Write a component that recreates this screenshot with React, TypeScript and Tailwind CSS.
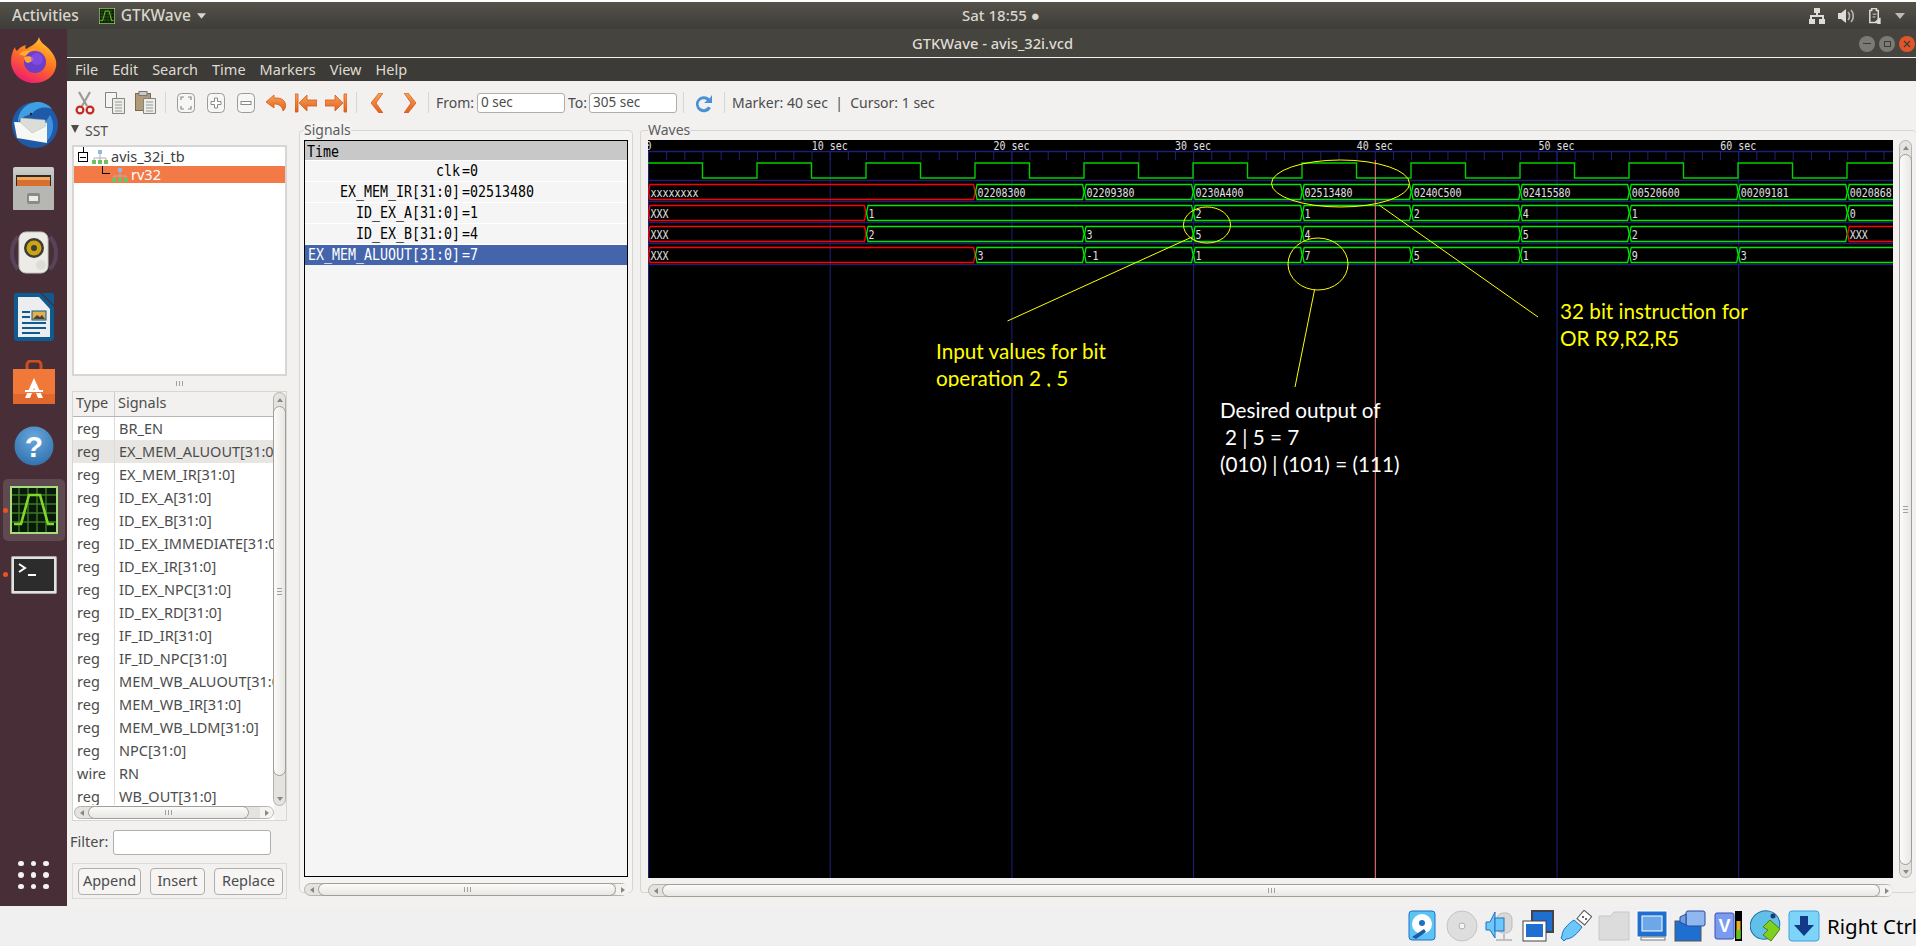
import React from 'react';

const uiFont = "font-['Noto_Sans',sans-serif]";
const monoFont = "font-['DejaVu_Sans_Mono',monospace]";

const xAt = (t: number) => 648 + t * 18.17;

type Seg = { from: number; to: number; label: string; red?: boolean };

const busRows: Seg[][] = [
  [
    { from: 0, to: 18, label: 'xxxxxxxx', red: true },
    { from: 18, to: 24, label: '02208300' },
    { from: 24, to: 30, label: '02209380' },
    { from: 30, to: 36, label: '0230A400' },
    { from: 36, to: 42, label: '02513480' },
    { from: 42, to: 48, label: '0240C500' },
    { from: 48, to: 54, label: '02415580' },
    { from: 54, to: 60, label: '00520600' },
    { from: 60, to: 66, label: '00209181' },
    { from: 66, to: 72, label: '00208681' },
  ],
  [
    { from: 0, to: 12, label: 'XXX', red: true },
    { from: 12, to: 30, label: '1' },
    { from: 30, to: 36, label: '2' },
    { from: 36, to: 42, label: '1' },
    { from: 42, to: 48, label: '2' },
    { from: 48, to: 54, label: '4' },
    { from: 54, to: 66, label: '1' },
    { from: 66, to: 72, label: '0' },
  ],
  [
    { from: 0, to: 12, label: 'XXX', red: true },
    { from: 12, to: 24, label: '2' },
    { from: 24, to: 30, label: '3' },
    { from: 30, to: 36, label: '5' },
    { from: 36, to: 48, label: '4' },
    { from: 48, to: 54, label: '5' },
    { from: 54, to: 66, label: '2' },
    { from: 66, to: 72, label: 'XXX', red: true },
  ],
  [
    { from: 0, to: 18, label: 'XXX', red: true },
    { from: 18, to: 24, label: '3' },
    { from: 24, to: 30, label: '-1' },
    { from: 30, to: 36, label: '1' },
    { from: 36, to: 42, label: '7' },
    { from: 42, to: 48, label: '5' },
    { from: 48, to: 54, label: '1' },
    { from: 54, to: 60, label: '9' },
    { from: 60, to: 72, label: '3' },
  ],
];

const signalRows = [
  { name: 'clk', value: '0' },
  { name: 'EX_MEM_IR[31:0]', value: '02513480' },
  { name: 'ID_EX_A[31:0]', value: '1' },
  { name: 'ID_EX_B[31:0]', value: '4' },
  { name: 'EX_MEM_ALUOUT[31:0]', value: '7', active: true },
];

const sstSignals = [
  ['reg', 'BR_EN'],
  ['reg', 'EX_MEM_ALUOUT[31:0]'],
  ['reg', 'EX_MEM_IR[31:0]'],
  ['reg', 'ID_EX_A[31:0]'],
  ['reg', 'ID_EX_B[31:0]'],
  ['reg', 'ID_EX_IMMEDIATE[31:0]'],
  ['reg', 'ID_EX_IR[31:0]'],
  ['reg', 'ID_EX_NPC[31:0]'],
  ['reg', 'ID_EX_RD[31:0]'],
  ['reg', 'IF_ID_IR[31:0]'],
  ['reg', 'IF_ID_NPC[31:0]'],
  ['reg', 'MEM_WB_ALUOUT[31:0]'],
  ['reg', 'MEM_WB_IR[31:0]'],
  ['reg', 'MEM_WB_LDM[31:0]'],
  ['reg', 'NPC[31:0]'],
  ['wire', 'RN'],
  ['reg', 'WB_OUT[31:0]'],
];

function clockPath() {
  let d = 'M648 163';
  for (let k = 0; k < 12; k++) {
    const rise = 648 + 109 * k;
    const fall = rise + 54.5;
    const next = rise + 109;
    d += ` L${fall} 163 L${fall} 178 L${next} 178 L${next} 163`;
  }
  return d;
}

// squeezed mono label, the gtkwave font is narrow and tall
const WaveText = ({ x, y, children }: { x: number; y: number; children: React.ReactNode }) => (
  <text transform={`translate(${x} ${y}) scale(0.86 1)`} fontSize="11.6" fill="#e0e0e0">
    {children}
  </text>
);

const Waves = () => {
  const ticks = Array.from({ length: 70 }, (_, i) => i);
  return (
    <svg viewBox="648 140 1245 738" className={`w-[1245px] h-[738px] block bg-black ${monoFont}`}>
      <defs>
        <clipPath id="noteClip">
          <rect x="900" y="280" width="900" height="107" />
        </clipPath>
      </defs>
      {[0, 10, 20, 30, 50, 60].map(t => (
        <line key={t} x1={xAt(t) + 0.5} x2={xAt(t) + 0.5} y1="152" y2="878" stroke="#1f1f80" />
      ))}
      {[151.5, 180.5, 201.5, 222.5, 243.5, 264.5].map(y => (
        <line key={y} x1="648" x2="1893" y1={y} y2={y} stroke="#1f1f70" strokeWidth="1.4" />
      ))}
      {ticks.map(t => (
        <line key={t} x1={xAt(t) + 0.5} x2={xAt(t) + 0.5} y1="152" y2="160" stroke="#1f1f80" />
      ))}
      <WaveText x={645.5} y={149.5}>0</WaveText>
      {[10, 20, 30, 40, 50, 60].map(t => (
        <WaveText key={t} x={xAt(t) - 18} y={149.5}>
          {t} sec
        </WaveText>
      ))}
      <path d={clockPath()} fill="none" stroke="#00d000" strokeWidth="1.4" />
      {busRows.map((row, r) => {
        const top = 184.5 + r * 21;
        const bottom = top + 15;
        const mid = top + 7.5;
        return row.map(seg => {
          const a = xAt(seg.from) + 0.5;
          const b = xAt(seg.to);
          return (
            <g key={`${r}-${seg.from}`}>
              <path
                d={`M${a} ${mid} L${a + 1.5} ${top} L${b - 1.5} ${top} L${b} ${mid} L${b - 1.5} ${bottom} L${a + 1.5} ${bottom} Z`}
                fill="none"
                stroke={seg.red ? '#ff0000' : '#00e800'}
                strokeWidth="1.3"
              />
              <WaveText x={a + 2} y={mid + 4.5}>
                {seg.label}
              </WaveText>
            </g>
          );
        });
      })}
      <line x1={xAt(40) + 0.5} x2={xAt(40) + 0.5} y1="160" y2="878" stroke="#ff8080" />
      <g fill="none" stroke="#ffff00" strokeWidth="1">
        <ellipse cx="1340.5" cy="183.5" rx="69" ry="23.5" />
        <ellipse cx="1207" cy="225" rx="23.5" ry="18" />
        <ellipse cx="1318" cy="264" rx="30" ry="26" />
        <line x1="1007.5" y1="321" x2="1192" y2="237" />
        <line x1="1314.5" y1="290" x2="1295" y2="387" />
        <line x1="1379" y1="205" x2="1538" y2="317" />
      </g>
      <g className="font-['Lato',sans-serif]" fontSize="20.7">
        <g fill="#ffff00">
          <text x="936" y="359">Input values for bit</text>
          <text x="936" y="386" clipPath="url(#noteClip)">
            operation 2 , 5
          </text>
          <text x="1560" y="319">32 bit instruction for</text>
          <text x="1560" y="346">OR R9,R2,R5</text>
        </g>
        <g fill="#ffffff">
          <text x="1220" y="418">Desired output of</text>
          <text x="1225" y="445">2 | 5 = 7</text>
          <text x="1220" y="472">(010) | (101) = (111)</text>
        </g>
      </g>
    </svg>
  );
};

const ArrowBtn = ({ dir, className = '' }: { dir: 'l' | 'r' | 'u' | 'd'; className?: string }) => {
  const points = { l: '6,1 2,4 6,7', r: '2,1 6,4 2,7', u: '1,6 4,2 7,6', d: '1,2 4,6 7,2' }[dir];
  return (
    <svg viewBox="0 0 8 8" className={`w-[8px] h-[8px] ${className}`}>
      <polygon points={points} fill="#8a8884" />
    </svg>
  );
};

const Grip = ({ vertical = false }: { vertical?: boolean }) => (
  <div className={`flex gap-[2px] ${vertical ? 'flex-col' : ''}`}>
    <span className={vertical ? 'h-px w-[5px] bg-[#a0a0a0]' : 'w-px h-[5px] bg-[#a0a0a0]'} />
    <span className={vertical ? 'h-px w-[5px] bg-[#a0a0a0]' : 'w-px h-[5px] bg-[#a0a0a0]'} />
    <span className={vertical ? 'h-px w-[5px] bg-[#a0a0a0]' : 'w-px h-[5px] bg-[#a0a0a0]'} />
  </div>
);

const HScroll = ({ thumb, className = '' }: { thumb: string; className?: string }) => (
  <div className={`flex items-center h-[13px] border border-[#b5b3af] rounded-full bg-[#e4e3e0] ${className}`}>
    <div className="w-[13px] h-full flex items-center justify-center shrink-0">
      <ArrowBtn dir="l" />
    </div>
    <div className="flex-1 h-full">
      <div className={`h-[13px] -mt-px border border-[#a09e9a] rounded-full bg-gradient-to-b from-[#fbfbfa] to-[#e8e7e4] flex items-center justify-center ${thumb}`}>
        <Grip />
      </div>
    </div>
    <div className="w-[13px] h-full flex items-center justify-center shrink-0 bg-[#f4f3f1] rounded-r-full">
      <ArrowBtn dir="r" />
    </div>
  </div>
);

const VScroll = ({ thumb, className = '' }: { thumb: string; className?: string }) => (
  <div className={`flex flex-col items-center w-[13px] border border-[#b5b3af] rounded-full bg-[#e4e3e0] ${className}`}>
    <div className="h-[13px] w-full flex items-center justify-center shrink-0">
      <ArrowBtn dir="u" />
    </div>
    <div className="flex-1 w-full">
      <div className={`w-[13px] -ml-px border border-[#a09e9a] rounded-full bg-gradient-to-r from-[#fbfbfa] to-[#e8e7e4] flex items-center justify-center ${thumb}`}>
        <Grip vertical />
      </div>
    </div>
    <div className="h-[13px] w-full flex items-center justify-center shrink-0">
      <ArrowBtn dir="d" />
    </div>
  </div>
);

// dock icons
const Firefox = () => (
  <svg viewBox="0 0 46 46" className="w-[46px] h-[46px]">
    <defs>
      <linearGradient id="ffA" x1="0.8" y1="0" x2="0.3" y2="1">
        <stop offset="0" stopColor="#ffcf33" />
        <stop offset="0.45" stopColor="#ff7a1f" />
        <stop offset="1" stopColor="#f0186f" />
      </linearGradient>
    </defs>
    <path d="M28 0c1 6 7 8 11 13 5 6 7 11 6 17-2 10-11 16-22 16C10 46 0 36 0 24c0-6 2-11 4-14 0 2 1 3 2 4 2-3 5-5 9-6-1 2-1 3 0 4 5-3 11-5 13-12z" fill="url(#ffA)" />
    <path d="M8 17c3-3 7-4 9-3 3-3 6-3 9-2-7 0-9 4-9 6-3 1-6 1-9-1z" fill="#ffb02e" />
    <circle cx="24" cy="25" r="11" fill="#6b3fc8" />
    <path d="M13 20c3-1 7-1 9 1 2 2-2 4-5 5-2 0-4-3-4-6z" fill="#ffa436" />
    <circle cx="26" cy="22" r="6" fill="#8a4ff0" opacity="0.7" />
  </svg>
);

const Thunderbird = () => (
  <svg viewBox="0 0 48 48" className="w-[48px] h-[48px]">
    <circle cx="25" cy="25" r="23" fill="#1f5aa8" />
    <path d="M8 22C8 10 18 1 30 2c5 1 9 3 12 7-8-3-16-1-20 5-5 1-10 3-14 8z" fill="#3f9fe0" />
    <path d="M40 15c5 8 4 19-3 26l-3-6 3-3-4-1 3-4-3-1z" fill="#3f8fdc" />
    <path d="M4 22l33 1v20L7 38z" fill="#f7f7f4" />
    <path d="M11 18l24 2 1 6-14 7-12-11z" fill="#dcdcd8" stroke="#b5b5b0" strokeWidth="0.5" />
    <circle cx="21" cy="14" r="1.2" fill="#223" />
  </svg>
);

const Files = () => (
  <svg viewBox="0 0 42 44" className="w-[42px] h-[44px]">
    <defs>
      <linearGradient id="fileBody" x1="0" y1="0" x2="0" y2="1">
        <stop offset="0" stopColor="#cfcfcb" />
        <stop offset="1" stopColor="#8f8f8b" />
      </linearGradient>
    </defs>
    <rect x="0" y="0" width="41" height="43" rx="2" fill="url(#fileBody)" />
    <rect x="3" y="8" width="35" height="11" fill="#2b2a28" />
    <rect x="4" y="10" width="33" height="3" fill="#f0a95a" />
    <rect x="4" y="13" width="33" height="6" fill="#d86f2e" />
    <rect x="0" y="19" width="41" height="24" rx="1" fill="#b6b6b2" />
    <rect x="14" y="26" width="13" height="11" rx="2" fill="#8a8a86" />
    <rect x="16" y="29" width="9" height="5" fill="#ececea" />
  </svg>
);

const Rhythmbox = () => (
  <svg viewBox="0 0 48 44" className="w-[48px] h-[44px]">
    <path d="M8 6C0 14 0 30 8 38M40 6c8 8 8 24 0 32" fill="none" stroke="#5e4f6b" strokeWidth="4" opacity="0.7" />
    <rect x="9" y="1" width="29" height="41" rx="7" fill="#ecebe6" stroke="#c8c6c0" />
    <circle cx="24" cy="17" r="10" fill="#3f3c35" />
    <circle cx="24" cy="17" r="7.5" fill="#c9a414" />
    <circle cx="24" cy="17" r="3" fill="#3f3c35" />
    <circle cx="31" cy="34" r="5" fill="#dddcd6" />
  </svg>
);

const Writer = () => (
  <svg viewBox="0 0 40 48" className="w-[40px] h-[48px]">
    <path d="M2 0h24l14 14v31a3 3 0 0 1-3 3H3a3 3 0 0 1-3-3V2a2 2 0 0 1 2-2z" fill="#0f5a8f" />
    <path d="M28 0h10a2 2 0 0 1 2 2v10z" fill="#0f5a8f" />
    <path d="M4 4h21l11 12v28H4z" fill="#ecedef" />
    <path d="M8 18h8v2H8zM8 23h8v2H8zM8 29h24v2H8zM8 34h24v2H8zM8 39h18v2H8z" fill="#0f5a8f" />
    <rect x="18" y="18" width="14" height="9" fill="#e3b04a" stroke="#0f5a8f" />
    <path d="M19 26l4-4 3 2 2-2 3 4z" fill="#444" />
  </svg>
);

const Software = () => (
  <svg viewBox="0 0 42 44" className="w-[42px] h-[44px]">
    <path d="M14 12V5a4 4 0 0 1 4-4h6a4 4 0 0 1 4 4v7" fill="none" stroke="#c9501f" strokeWidth="3" />
    <path d="M0 9h42v35H0z" fill="#f0793a" />
    <path d="M0 34h42v10H0z" fill="#e0682c" />
    <path d="M21 18l-9 20h5l4-10 4 10h5z" fill="#fff" />
    <rect x="12" y="30" width="18" height="3" fill="#f0793a" />
    <rect x="12" y="30" width="18" height="2" fill="#fff" />
  </svg>
);

const Help = () => (
  <svg viewBox="0 0 40 40" className="w-[40px] h-[40px]">
    <defs>
      <radialGradient id="helpBg" cx="0.5" cy="0.3" r="0.8">
        <stop offset="0" stopColor="#6aa9dd" />
        <stop offset="1" stopColor="#2a6ba8" />
      </radialGradient>
    </defs>
    <circle cx="20" cy="20" r="19.5" fill="url(#helpBg)" />
    <text x="20" y="31" textAnchor="middle" fontSize="30" fontWeight="700" fill="#ffffff" className="font-['Liberation_Sans',sans-serif]">
      ?
    </text>
  </svg>
);

const GtkWaveLogo = ({ size }: { size: string }) => (
  <svg viewBox="0 0 48 48" className={size}>
    <rect x="1" y="1" width="46" height="46" fill="#0a1a0a" stroke="#a8dc78" strokeWidth="2" />
    <path d="M2 9h44M2 18h44M2 27h44M2 36h44M9 2v44M18 2v44M27 2v44M36 2v44" stroke="#3d7a24" strokeWidth="1.4" />
    <path d="M4 38h7L19 9h11l8 29h6" fill="none" stroke="#7fd82a" strokeWidth="2.6" />
  </svg>
);

const TerminalIcon = () => (
  <svg viewBox="0 0 46 38" className="w-[46px] h-[38px]">
    <rect x="0.5" y="0.5" width="45" height="37" rx="1" fill="#e2e2de" stroke="#a8a8a4" />
    <rect x="3" y="3" width="40" height="32" fill="#2c2c2c" />
    <path d="M8 8l6 4-6 4" fill="none" stroke="#fff" strokeWidth="2" />
    <rect x="17" y="18" width="8" height="2" fill="#fff" />
  </svg>
);

const Dock = () => {
  const slot = 'h-[64.3px] w-full flex items-center justify-center shrink-0';
  return (
    <div className="w-[67px] bg-[#482e37] flex flex-col items-center shrink-0">
      <div className="w-full -mt-px">
        <div className={slot}><Firefox /></div>
        <div className={slot}><Thunderbird /></div>
        <div className={slot}><Files /></div>
        <div className={slot}><Rhythmbox /></div>
        <div className={slot}><Writer /></div>
        <div className={slot}><Software /></div>
        <div className={slot}><Help /></div>
        <div className={`${slot} relative`}>
          <div className="w-[62px] h-[62px] bg-[#5f4a52] rounded-[5px] flex items-center justify-center">
            <GtkWaveLogo size="w-[48px] h-[48px]" />
          </div>
          <span className="absolute left-[3px] top-[30px] w-[5px] h-[5px] rounded-full bg-[#e95420]" />
        </div>
        <div className={`${slot} relative`}>
          <TerminalIcon />
          <span className="absolute left-[3px] top-[30px] w-[5px] h-[5px] rounded-full bg-[#e95420]" />
        </div>
      </div>
      <div className="mt-auto mb-[17px] grid grid-cols-3 gap-x-[7px] gap-y-[6px]">
        {Array.from({ length: 9 }).map((_, i) => (
          <span key={i} className="w-[5.5px] h-[5.5px] rounded-full bg-[#f4f2f2]" />
        ))}
      </div>
    </div>
  );
};

// toolbar icons
const Tool = ({ children }: { children: React.ReactNode }) => (
  <div className="w-[30px] h-[24px] flex items-center justify-center shrink-0">{children}</div>
);

const Sep = ({ className = '' }: { className?: string }) => (
  <span className={`w-px h-[21px] bg-[#d8d6d2] shrink-0 ${className}`} />
);

const Cut = () => (
  <svg viewBox="0 0 20 24" className="w-[20px] h-[24px]">
    <path d="M4 1l8 14M15 1L7 15" stroke="#9a9a96" strokeWidth="2.2" />
    <circle cx="5" cy="19" r="3.4" fill="none" stroke="#c22a22" strokeWidth="2.2" />
    <circle cx="15" cy="19" r="3.4" fill="none" stroke="#c22a22" strokeWidth="2.2" />
  </svg>
);

const Copy = () => (
  <svg viewBox="0 0 20 22" className="w-[20px] h-[22px]">
    <path d="M.5.5h11v15H.5z" fill="#f4f4f2" stroke="#85857f" />
    <path d="M7.5 6.5h12v15h-12z" fill="#ececea" stroke="#85857f" />
    <path d="M10 10h7M10 13h7M10 16h7M10 19h7" stroke="#9a9a96" />
  </svg>
);

const Paste = () => (
  <svg viewBox="0 0 21 23" className="w-[21px] h-[23px]">
    <rect x="0.5" y="2.5" width="15" height="17" fill="#b09a78" stroke="#7d6a4e" />
    <rect x="4" y="0.5" width="8" height="4" fill="#ccc" stroke="#777" />
    <path d="M8.5 7.5h12v15h-12z" fill="#ececea" stroke="#85857f" />
    <path d="M11 11h7M11 14h7M11 17h7M11 20h7" stroke="#9a9a96" />
  </svg>
);

const ZoomFrame = ({ children }: { children: React.ReactNode }) => (
  <svg viewBox="0 0 18 20" className="w-[18px] h-[20px]">
    <rect x="0.5" y="0.5" width="17" height="19" rx="4" fill="#f6f6f4" stroke="#9c9a96" />
    {children}
  </svg>
);

const OrangeArrow = ({ d, w, h, vb }: { d: string; w: string; h: string; vb: string }) => (
  <svg viewBox={vb} className={`${w} ${h}`}>
    <defs>
      <linearGradient id="orangeFill" x1="0" y1="0" x2="0" y2="1">
        <stop offset="0" stopColor="#f7a35a" />
        <stop offset="1" stopColor="#e0601c" />
      </linearGradient>
    </defs>
    <path d={d} fill="url(#orangeFill)" stroke="#d85c18" strokeWidth="0.8" />
  </svg>
);

const Toolbar = () => (
  <div className={`h-[37px] flex items-center pl-[3px] pt-[6px] shrink-0 text-[14px] text-[#4c4c4c] ${uiFont}`}>
    <Tool><Cut /></Tool>
    <Tool><Copy /></Tool>
    <Tool><Paste /></Tool>
    <Sep className="ml-[5px] mr-[5px]" />
    <Tool>
      <ZoomFrame>
        <path d="M4 7V4h3M11 4h3v3M14 13v3h-3M7 16H4v-3" fill="none" stroke="#8c8a86" strokeWidth="1.2" />
      </ZoomFrame>
    </Tool>
    <Tool>
      <ZoomFrame>
        <path d="M7.5 5h3v3.5H14v3h-3.5V15h-3v-3.5H4v-3h3.5z" fill="#fff" stroke="#8c8a86" />
      </ZoomFrame>
    </Tool>
    <Tool>
      <ZoomFrame>
        <rect x="4" y="8.5" width="10" height="3" fill="#fff" stroke="#8c8a86" />
      </ZoomFrame>
    </Tool>
    <Tool>
      <OrangeArrow vb="0 0 22 18" w="w-[22px]" h="h-[18px]" d="M9 1L1 8l8 6v-4c5 0 8 2 9 7 3-2 4-8 0-11-2-2-5-2-9-2z" />
    </Tool>
    <Tool>
      <OrangeArrow vb="0 0 22 20" w="w-[22px]" h="h-[20px]" d="M0 1h3v18H0zM12 2L4 10l8 8v-5h10V7H12z" />
    </Tool>
    <Tool>
      <OrangeArrow vb="0 0 22 20" w="w-[22px]" h="h-[20px]" d="M22 1h-3v18h3zM10 2l8 8-8 8v-5H0V7h10z" />
    </Tool>
    <Sep className="ml-[5px] mr-[5px]" />
    <Tool>
      <OrangeArrow vb="0 0 12 20" w="w-[12px]" h="h-[20px]" d="M8 0h4L5 10l7 10H8L0 10z" />
    </Tool>
    <div className="ml-[3px]">
      <Tool>
        <OrangeArrow vb="0 0 12 20" w="w-[12px]" h="h-[20px]" d="M4 0H0l7 10-7 10h4l8-10z" />
      </Tool>
    </div>
    <Sep className="ml-[3px]" />
    <span className="ml-[7px] w-[41px]">From:</span>
    <div className="w-[88px] h-[20px] border border-[#b0aeaa] rounded-[3px] bg-white flex items-center pl-[3px] text-[13.5px] leading-none">0 sec</div>
    <span className="ml-[3px] w-[21px]">To:</span>
    <div className="w-[88px] h-[20px] border border-[#b0aeaa] rounded-[3px] bg-white flex items-center pl-[3px] text-[13.5px] leading-none">305 sec</div>
    <Sep className="ml-[6px]" />
    <svg viewBox="0 0 20 20" className="w-[20px] h-[20px] ml-[10px] mr-[10px]">
      <path d="M15.5 5.5A8 8 0 1 0 17 15l-3-1.5a5 5 0 1 1-1-6L10 10h8V2z" fill="#4a90d2" />
    </svg>
    <Sep />
    <span className="ml-[7px]">Marker: 40 sec&nbsp; | &nbsp;Cursor: 1 sec</span>
  </div>
);

const HierIcon = () => (
  <svg viewBox="0 0 16 16" className="w-[16px] h-[16px] shrink-0">
    <rect x="6" y="1" width="4" height="4" fill="#8fb8e8" />
    <path d="M8 5v4M2 11V9h12v2M8 9v2" stroke="#b0b0b0" fill="none" />
    <rect x="0" y="11" width="4" height="4" fill="#6ec060" />
    <rect x="6" y="11" width="4" height="4" fill="#6ec060" />
    <rect x="12" y="11" width="4" height="4" fill="#6ec060" />
  </svg>
);

const LeftPane = () => (
  <div className={`w-[226px] pl-[5px] pr-[6px] flex flex-col shrink-0 text-[#4c4c4c] ${uiFont}`}>
    <div className="h-[27px] flex items-center text-[14px] shrink-0 pb-[2px]">
      <svg viewBox="0 0 8 8" className="w-[8px] h-[8px] -ml-px mb-[4px]">
        <polygon points="0,0 8,0 4,8" fill="#4c4c4c" />
      </svg>
      <span className="ml-[6px]">SST</span>
    </div>
    <div className="h-[231px] border-2 border-[#d8d6d2] bg-white text-[14.5px] text-[#3c3c3c] shrink-0 relative">
      <div className="h-[19px] flex items-center pl-[18px] gap-[3px]">
        <HierIcon />
        <span>avis_32i_tb</span>
      </div>
      <div className="h-[17px] bg-[#f37946] flex items-center pl-[38px] gap-[3px] text-white">
        <HierIcon />
        <span>rv32</span>
      </div>
      <div className="absolute left-[4px] top-[5px] w-[10px] h-[10px] border border-black flex items-center justify-center">
        <span className="w-[6px] h-px bg-black" />
      </div>
      <span className="absolute left-[9px] top-0 w-px h-[5px] bg-black" />
      <span className="absolute left-[28px] top-[19px] w-[8px] h-[8px] border-l border-b border-black" />
    </div>
    <div className="h-[15px] flex items-center justify-center shrink-0">
      <Grip />
    </div>
    <div className="h-[430px] border border-[#d8d6d2] shrink-0 flex flex-col relative overflow-hidden">
      <div className="h-[25px] flex border-b border-[#b8b6b2] text-[14.5px] shrink-0 bg-[#f2f1f0] w-[201px]">
        <span className="w-[42px] pl-[3px] border-r border-[#cfcdc9]">Type</span>
        <span className="pl-[3px]">Signals</span>
      </div>
      <div className="w-[201px] bg-white overflow-hidden text-[14.5px] flex-1">
        {sstSignals.map(([type, name]) => (
          <div
            key={name}
            className={`h-[23px] flex items-center whitespace-nowrap ${name === 'EX_MEM_ALUOUT[31:0]' ? 'bg-[#e8e6e3]' : ''}`}
          >
            <span className="w-[42px] pl-[4px] border-r border-[#dddbd7] h-full flex items-center shrink-0">{type}</span>
            <span className="pl-[4px]">{name}</span>
          </div>
        ))}
      </div>
      <div className="h-[15px] bg-white shrink-0 flex items-center pl-px w-[201px]">
        <HScroll thumb="w-[161px]" className="w-[200px]" />
      </div>
      <VScroll thumb="h-[370px]" className="absolute right-0 top-0 h-[414px]" />
    </div>
    <div className="h-[42px] flex items-center text-[14.5px] shrink-0 -ml-[2px]">
      <span className="w-[43px]">Filter:</span>
      <div className="w-[158px] h-[25px] border border-[#b0aeaa] rounded-[3px] bg-white" />
    </div>
    <div className="h-[36px] border border-[#dddbd7] flex items-center pl-[5px] text-[14.5px] shrink-0">
      <div className="w-[63px] h-[27px] border border-[#b0aeaa] rounded-[4px] flex items-center justify-center bg-[#f6f5f4]">Append</div>
      <div className="w-[55px] h-[27px] ml-[9px] border border-[#b0aeaa] rounded-[4px] flex items-center justify-center bg-[#f6f5f4]">Insert</div>
      <div className="w-[69px] h-[27px] ml-[9px] border border-[#b0aeaa] rounded-[4px] flex items-center justify-center bg-[#f6f5f4]">Replace</div>
    </div>
  </div>
);

const SignalsPane = () => (
  <fieldset className={`w-[333px] h-[772px] mt-[3px] ml-[6px] border border-[#d8d6d2] rounded-[4px] px-[4px] shrink-0 bg-[#f4f4f3] ${uiFont}`}>
    <legend className="text-[14px] text-[#5c5c5c] leading-[18px] bg-[#f4f4f3]">Signals</legend>
    <div className={`mt-px h-[737px] border border-black bg-[#f5f5f5] text-[13.3px] ${monoFont}`}>
      <div className="h-[19px] bg-[#c8c8c8] flex items-center pl-[2px] pt-[2px] text-black">
        <span className="scale-y-[1.15]">Time</span>
      </div>
      {signalRows.map(row => (
        <div
          key={row.name}
          className={`h-[21px] flex items-center whitespace-pre border-t border-[#ffffff] ${row.active ? 'bg-[#4464ac] text-white border-[#4464ac]' : 'bg-[#f5f5f5] text-black'}`}
        >
          <span className="w-[155px] text-right shrink-0 scale-y-[1.15]">{row.name}</span>
          <span className="ml-[2px] scale-y-[1.15]">={row.value}</span>
        </div>
      ))}
    </div>
    <HScroll thumb="w-[298px]" className="mt-[6px] w-[324px]" />
  </fieldset>
);

const WavesPane = () => (
  <fieldset className={`w-[1276px] h-[772px] mt-[3px] ml-[7px] border border-[#d8d6d2] border-r-0 rounded-[4px] pl-[7px] shrink-0 ${uiFont}`}>
    <legend className="text-[14px] text-[#5c5c5c] leading-[18px]">Waves</legend>
    <div className="mt-px flex gap-[6px]">
      <Waves />
      <VScroll thumb="h-[711px]" className="h-[738px]" />
    </div>
    <HScroll thumb="w-[1218px]" className="mt-[6px] w-[1245px]" />
  </fieldset>
);

const VBoxIcon = ({ children }: { children: React.ReactNode }) => (
  <div className="w-[38px] h-[31px] shrink-0 flex items-center">
    <svg viewBox="0 0 32 32" className="w-[32px] h-[32px]">
      {children}
    </svg>
  </div>
);

const VBoxBar = () => (
  <div className="h-[40px] bg-[#f0f0f0] flex items-center pl-[1408px] shrink-0 overflow-hidden">
    <VBoxIcon>
      <rect x="1" y="1" width="26" height="29" rx="3" fill="#5cc4f4" stroke="#2070c0" />
      <circle cx="14" cy="14" r="10" fill="#fff" />
      <circle cx="14" cy="13" r="3" fill="#2070c0" />
      <path d="M4 27l12-8 2 3-10 7z" fill="#1f5aa8" />
    </VBoxIcon>
    <VBoxIcon>
      <circle cx="16" cy="16" r="15" fill="#dedede" stroke="#c4c4c4" />
      <circle cx="16" cy="16" r="3" fill="#f4f4f4" stroke="#b0b0b0" />
    </VBoxIcon>
    <VBoxIcon>
      <rect x="13" y="3" width="15" height="20" rx="6" fill="#d8d8d8" stroke="#bbb" />
      <path d="M20 24v5M12 30h16" stroke="#c0c0c0" strokeWidth="2" />
      <path d="M0 12h4l5-10v26l-5-8H0z" transform="translate(2 0)" fill="#6cc8f8" stroke="#2070c0" />
      <rect x="11" y="8" width="9" height="13" fill="#6cc8f8" stroke="#2070c0" />
    </VBoxIcon>
    <VBoxIcon>
      <rect x="10" y="1" width="21" height="21" fill="#1f6fd0" stroke="#444" strokeWidth="2" />
      <rect x="1" y="11" width="23" height="20" fill="#fff" stroke="#444" />
      <rect x="4" y="14" width="17" height="13" fill="#1f6fd0" />
    </VBoxIcon>
    <VBoxIcon>
      <path d="M2 26c0-6 6-12 12-16l8 7c-4 6-10 12-16 12l-2 2-3-3z" fill="#6cc8f8" stroke="#2070c0" />
      <rect x="19" y="2" width="10" height="11" transform="rotate(40 24 8)" fill="#fff" stroke="#555" />
      <circle cx="23" cy="7" r="1" fill="#333" />
      <circle cx="26" cy="9" r="1" fill="#333" />
    </VBoxIcon>
    <VBoxIcon>
      <path d="M1 6h12l3-4h15v28H1z" fill="#dcdcdc" stroke="#c8c8c8" />
    </VBoxIcon>
    <VBoxIcon>
      <rect x="1" y="1" width="30" height="26" fill="#1f6fd0" stroke="#fff" />
      <rect x="6" y="6" width="20" height="15" fill="#6ca8e8" stroke="#fff" />
      <rect x="5" y="27" width="24" height="3" fill="#fff" stroke="#777" />
    </VBoxIcon>
    <VBoxIcon>
      <rect x="1" y="11" width="26" height="20" fill="#1f6fd0" stroke="#555" />
      <rect x="12" y="1" width="19" height="15" rx="2" fill="#8fb8f0" stroke="#2a4aa0" />
      <path d="M6 7l6-3v11l-6-3z" fill="#6ca0e0" stroke="#2a4aa0" />
    </VBoxIcon>
    <VBoxIcon>
      <rect x="3" y="3" width="19" height="26" rx="2" fill="#7a9cf0" stroke="#3a50b0" />
      <text x="12.5" y="22" fontSize="18" fontWeight="700" textAnchor="middle" fill="#fff" className="font-['Liberation_Sans',sans-serif]">V</text>
      <rect x="23" y="1" width="7" height="30" fill="#000" />
      <rect x="24.5" y="11" width="4" height="18" fill="#e8b020" />
      <rect x="24.5" y="20" width="4" height="9" fill="#58c820" />
    </VBoxIcon>
    <VBoxIcon>
      <ellipse cx="15" cy="15" rx="15" ry="14" transform="rotate(-30 15 15)" fill="#60c0e8" stroke="#1f6fa0" />
      <path d="M20 10l10 9-9 12-8-6 5-5-5-3z" fill="#80d020" stroke="#508010" />
      <circle cx="23" cy="6" r="2.5" fill="#1f3a70" />
    </VBoxIcon>
    <VBoxIcon>
      <rect x="1" y="1" width="30" height="30" rx="3" fill="#7cd4f8" stroke="#40a0e0" />
      <path d="M12 6h8v9h6L16 26 6 15h6z" fill="#123a88" />
    </VBoxIcon>
    <span className="ml-[1px] text-[20.5px] text-black whitespace-nowrap font-['Noto_Sans',sans-serif]">Right Ctrl</span>
  </div>
);

const TopBar = () => (
  <div className={`h-[27px] mt-[2px] bg-gradient-to-b from-[#555249] to-[#3e3d39] flex items-center text-[15.5px] font-medium text-[#d8d6cf] shrink-0 relative ${uiFont}`}>
    <span className="ml-[12px]">Activities</span>
    <span className="ml-[20px]">
      <GtkWaveLogo size="w-[16px] h-[16px]" />
    </span>
    <span className="ml-[6px]">GTKWave</span>
    <svg viewBox="0 0 10 6" className="w-[9px] h-[6px] ml-[6px]">
      <polygon points="0,0 10,0 5,6" fill="#d8d6cf" />
    </svg>
    <span className="absolute left-[962px] text-[15px]">Sat 18:55 ●</span>
    <div className="ml-auto mr-[11px] flex items-center gap-[13px]">
      <svg viewBox="0 0 16 16" className="w-[16px] h-[16px]">
        <path d="M5 0h6v5H9v2h6v4h1v5h-6v-5h3V9H3v2h3v5H0v-5h1V7h6V5H5z" fill="#dedcd6" />
      </svg>
      <svg viewBox="0 0 16 16" className="w-[16px] h-[16px]">
        <path d="M0 5h3l5-4v14l-5-4H0z" fill="#dedcd6" />
        <path d="M10 4c2 2 2 6 0 8M13 2c3 3 3 9 0 12" fill="none" stroke="#b8b6b0" strokeWidth="1.6" />
      </svg>
      <svg viewBox="0 0 16 16" className="w-[15px] h-[16px]">
        <path d="M3 2h2V0h5v2h2v13H3z" fill="none" stroke="#dedcd6" strokeWidth="1.6" />
        <path d="M6 6h4M6 9h3M9 14l5-4v8z" stroke="#dedcd6" fill="#dedcd6" />
      </svg>
      <svg viewBox="0 0 10 6" className="w-[10px] h-[6px]">
        <polygon points="0,0 10,0 5,6" fill="#bdbbb5" />
      </svg>
    </div>
  </div>
);

const WinBtn = ({ bg, children }: { bg: string; children: React.ReactNode }) => (
  <div className={`w-[16px] h-[16px] rounded-full flex items-center justify-center text-[#3c3b37] ${bg}`}>{children}</div>
);

const TitleBar = () => (
  <div className={`h-[28px] bg-[#45443f] flex items-center relative shrink-0 text-[14.7px] font-medium text-[#dfdbd2] ${uiFont}`}>
    <span className="absolute left-[845px]">GTKWave - avis_32i.vcd</span>
    <div className="ml-auto mr-[1px] flex gap-[4px] pt-[1px]">
      <WinBtn bg="bg-[#7b7a75]"><span className="w-[8px] h-px bg-[#3c3b37]" /></WinBtn>
      <WinBtn bg="bg-[#7b7a75]"><span className="w-[7px] h-[6px] border border-[#3c3b37]" /></WinBtn>
      <WinBtn bg="bg-[#e0562a]">
        <svg viewBox="0 0 8 8" className="w-[8px] h-[8px]">
          <path d="M1 1l6 6M7 1L1 7" stroke="#3c3b37" strokeWidth="1.2" />
        </svg>
      </WinBtn>
    </div>
  </div>
);

const MenuBar = () => (
  <div className={`h-[23px] bg-[#3c3b37] flex items-center gap-[14px] pl-[8px] text-[14.5px] text-[#dfdbd2] shrink-0 ${uiFont}`}>
    {['File', 'Edit', 'Search', 'Time', 'Markers', 'View', 'Help'].map(item => (
      <span key={item}>{item}</span>
    ))}
  </div>
);

const App: React.FC = () => {
  return (
    <div className="w-[1916px] h-[946px] overflow-hidden bg-white flex flex-col">
      <TopBar />
      <div className="flex h-[877px] shrink-0">
        <Dock />
        <div className="flex-1 flex flex-col bg-[#f2f1f0] min-w-0">
          <TitleBar />
          <div className="h-px bg-[#f4f2ee] shrink-0" />
          <MenuBar />
          <Toolbar />
          <div className="flex flex-1 min-h-0">
            <LeftPane />
            <SignalsPane />
            <WavesPane />
          </div>
        </div>
      </div>
      <VBoxBar />
    </div>
  );
};

export default App;
